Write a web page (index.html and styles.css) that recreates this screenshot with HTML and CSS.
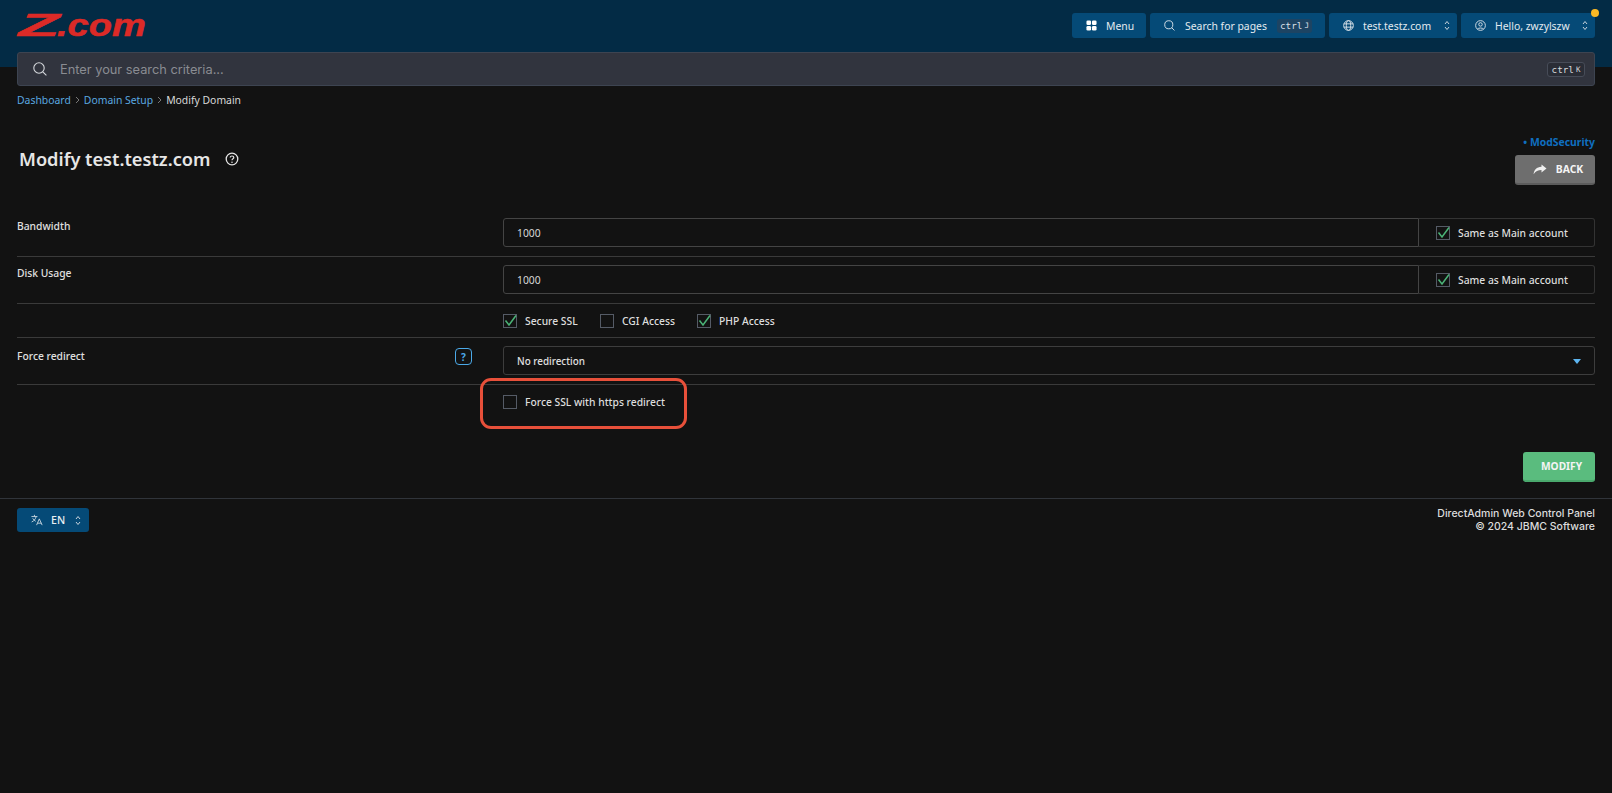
FILE: index.html
```html
<!DOCTYPE html>
<html lang="en">
<head>
<meta charset="utf-8">
<title>Modify test.testz.com</title>
<link rel="stylesheet" href="styles.css">
</head>
<body>
<header class="top">
  <div class="top-row">
    <svg class="logo" viewBox="0 0 129 23" role="img" aria-label="Z.com">
      <text class="logo-text" x="1.5" y="22" textLength="41" lengthAdjust="spacingAndGlyphs">Z</text>
      <text class="logo-text" x="40" y="22" textLength="89" lengthAdjust="spacingAndGlyphs">.com</text>
    </svg>
    <nav class="top-nav">
      <button class="nav-btn nav-menu">
        <svg class="ico" viewBox="0 0 12 12"><rect x="0.5" y="0.5" width="5" height="5" rx="1.4" fill="#fff"/><rect x="6.5" y="0.5" width="5" height="5" rx="1.4" fill="#fff"/><rect x="0.5" y="6.5" width="5" height="5" rx="1.4" fill="#fff"/><rect x="6.5" y="6.5" width="5" height="5" rx="1.4" fill="#fff"/></svg>
        <span>Menu</span>
      </button>
      <button class="nav-btn nav-search">
        <svg class="ico" viewBox="0 0 12 12" fill="none" stroke="#dfe6ec" stroke-width="1"><circle cx="5.2" cy="5.2" r="4.4"/><path d="M8.4 8.4L11.4 11.4"/></svg>
        <span>Search for pages</span>
        <kbd class="kbd-nav">ctrl<b>J</b></kbd>
      </button>
      <button class="nav-btn nav-domain">
        <svg class="ico" viewBox="0 0 12 12" fill="none" stroke="#dfe6ec" stroke-width="1"><circle cx="6" cy="6" r="5.3"/><ellipse cx="6" cy="6" rx="2.4" ry="5.3"/><path d="M1 4.2H11M1 7.8H11"/></svg>
        <span class="grow">test.testz.com</span>
        <svg class="updown" viewBox="0 0 6 11" fill="none" stroke="#c8d3dc" stroke-width="1"><path d="M1 4L3 1.5L5 4M1 7L3 9.5L5 7"/></svg>
      </button>
      <button class="nav-btn nav-user">
        <svg class="ico" viewBox="0 0 12 12" fill="none" stroke="#dfe6ec" stroke-width="1"><circle cx="6" cy="6" r="5.3"/><circle cx="6" cy="4.8" r="1.9"/><path d="M2.8 9.8C3.6 8.4 8.4 8.4 9.2 9.8"/></svg>
        <span class="grow">Hello, zwzylszw</span>
        <svg class="updown" viewBox="0 0 6 11" fill="none" stroke="#c8d3dc" stroke-width="1"><path d="M1 4L3 1.5L5 4M1 7L3 9.5L5 7"/></svg>
        <i class="dot"></i>
      </button>
    </nav>
  </div>
  <div class="search">
    <svg class="search-ico" viewBox="0 0 14 14" fill="none" stroke="#d5d8dc" stroke-width="1.1"><circle cx="6" cy="6" r="5.2"/><path d="M9.8 9.8L13.4 13.4"/></svg>
    <span class="search-text">Enter your search criteria...</span>
    <kbd class="kbd-search">ctrl<b>K</b></kbd>
  </div>
</header>

<main class="page">
  <div class="crumbs">
    <a>Dashboard</a><svg class="sep" viewBox="0 0 5 8"><path d="M1 1L4 4L1 7"/></svg><a>Domain Setup</a><svg class="sep" viewBox="0 0 5 8"><path d="M1 1L4 4L1 7"/></svg><span>Modify Domain</span>
  </div>

  <div class="head">
    <h1 class="title">Modify test.testz.com
      <svg class="title-help" viewBox="0 0 14 14" fill="none" stroke="#e4e4e4" stroke-width="1.3"><circle cx="7" cy="7" r="5.8"/><path d="M5.2 5.6C5.2 3.4 8.8 3.5 8.8 5.5C8.8 6.9 7 6.8 7 8.3" stroke-width="1.2"/><circle cx="7" cy="10.2" r="0.5" fill="#e4e4e4" stroke-width="0.5"/></svg>
    </h1>
    <div class="head-side">
      <a class="modsec">• ModSecurity</a>
      <button class="btn btn-back">
        <svg class="back-ico" viewBox="0 0 14 11"><path d="M8.5 0.5L13.5 4.5L8.5 8.5V6C5 6 2.5 7.2 0.6 10.3C1 6 3.6 3 8.5 2.8Z" fill="#f0f0f0"/></svg>
        BACK
      </button>
    </div>
  </div>

  <form class="form">
    <div class="row row-field">
      <label class="lbl">Bandwidth</label>
      <div class="group">
        <div class="input">1000</div>
        <div class="addon"><i class="cb on"><svg viewBox="0 0 14 14"><path d="M2.5 6.5L6 11L13 1.5"/></svg></i>Same as Main account</div>
      </div>
    </div>
    <div class="row row-field">
      <label class="lbl">Disk Usage</label>
      <div class="group">
        <div class="input">1000</div>
        <div class="addon"><i class="cb on"><svg viewBox="0 0 14 14"><path d="M2.5 6.5L6 11L13 1.5"/></svg></i>Same as Main account</div>
      </div>
    </div>
    <div class="row row-checks">
      <div class="lbl"></div>
      <div class="checks">
        <span class="check"><i class="cb on"><svg viewBox="0 0 14 14"><path d="M2.5 6.5L6 11L13 1.5"/></svg></i>Secure SSL</span>
        <span class="check"><i class="cb"></i>CGI Access</span>
        <span class="check"><i class="cb on"><svg viewBox="0 0 14 14"><path d="M2.5 6.5L6 11L13 1.5"/></svg></i>PHP Access</span>
      </div>
    </div>
    <div class="row row-field">
      <label class="lbl lbl-help">Force redirect<i class="help">?</i></label>
      <div class="select">No redirection<i class="caret"></i></div>
    </div>
    <div class="row row-last">
      <div class="lbl"></div>
      <div class="checks">
        <span class="check highlight"><i class="cb"></i>Force SSL with https redirect<i class="ring"></i></span>
      </div>
    </div>
    <div class="actions"><button class="btn btn-modify" type="button">MODIFY</button></div>
  </form>
</main>

<footer class="foot">
  <button class="lang">
    <svg class="lang-ico" viewBox="0 0 14 13" fill="none" stroke="#d5dfe7" stroke-width="1"><path d="M0.5 2.5H7.5M4 0.5V2.5M6 2.5C5.4 5.4 3.4 7.6 0.8 8.8M2 4.5C2.8 6 4 7.2 5.5 8"/><path d="M6.5 12.5L9.7 5.2L13 12.5M7.6 10.2H12"/></svg>
    <span>EN</span>
    <svg class="updown" viewBox="0 0 6 11" fill="none" stroke="#c8d3dc" stroke-width="1"><path d="M1 4L3 1.5L5 4M1 7L3 9.5L5 7"/></svg>
  </button>
  <div class="copy">DirectAdmin Web Control Panel<br>© 2024 JBMC Software</div>
</footer>
</body>
</html>
```

FILE: styles.css
```css
* { box-sizing: border-box; }
html, body { margin: 0; height: 100%; }
body {
  background: #121212;
  color: #e6e6e6;
  font-family: "Noto Sans", sans-serif;
  font-size: 10.3px;
  min-height: 793px;
}
button { font-family: inherit; border: 0; padding: 0; cursor: pointer; }
i { font-style: normal; }

.top {
  padding: 13px 17px 0;
  background: linear-gradient(#032b45 67px, transparent 67px);
}
.top-row { display: flex; justify-content: space-between; height: 25px; }
.logo { display: block; width: 129px; height: 23px; margin-top: 1px; overflow: visible; }
.logo-text { font: italic 700 31px "Liberation Sans", sans-serif; fill: #dc2a27; stroke: #dc2a27; stroke-width: 0.5; }
.top-nav { display: flex; gap: 4px; }
.nav-btn {
  position: relative;
  display: flex;
  align-items: center;
  height: 25px;
  padding: 0 0 0 14px;
  gap: 9px;
  background: #054a77;
  color: #e3eaf0;
  border-radius: 3px;
  font-size: 10.4px;
  white-space: nowrap;
}
.nav-menu { width: 74px; }
.nav-search { width: 175px; gap: 10px; }
.nav-domain { width: 128px; }
.nav-user { width: 134px; }
.grow { flex: 1; text-align: left; }
.ico { width: 11px; height: 11px; flex: none; }
.updown { width: 6px; height: 11px; flex: none; margin-right: 7px; }
.dot {
  position: absolute;
  top: -4px;
  right: -4px;
  width: 8px;
  height: 8px;
  border-radius: 50%;
  background: #fdb924;
}
kbd { font-family: "DejaVu Sans Mono", "Liberation Mono", monospace; }
kbd b { font-weight: 400; font-size: 7.5px; margin-left: 2px; }
.kbd-nav {
  display: flex;
  align-items: center;
  justify-content: center;
  width: 37px;
  height: 14px;
  margin-left: auto;
  margin-right: 13px;
  background: #1d4463;
  border-radius: 3px;
  font-size: 9.3px;
  color: #d8dfe5;
}
.search {
  display: flex;
  align-items: center;
  height: 34px;
  margin-top: 14px;
  padding: 0 9px 0 15px;
  background: #31343e;
  border: 1px solid #3d4451;
  border-radius: 3px;
}
.search-ico { width: 14px; height: 14px; flex: none; }
.search-text { flex: 1; margin-left: 13px; font: 12.8px Inter, sans-serif; color: #8a8c92; }
.kbd-search {
  display: flex;
  align-items: center;
  justify-content: center;
  width: 38px;
  height: 15px;
  border: 1px solid #474c58;
  border-radius: 3px;
  background: #2a2d36;
  font-size: 9.3px;
  color: #d8dadd;
}

.page { padding: 0 17px; }
.crumbs { display: flex; align-items: center; height: 27px; font-size: 10.4px; color: #d9d9d9; }
.crumbs a { color: #5aa9e0; }
.sep { width: 5px; height: 8px; margin: 0 4px; fill: none; stroke: #777; stroke-width: 1; }

.head { display: flex; justify-content: space-between; height: 51px; margin-top: 21px; }
.title {
  display: flex;
  align-items: center;
  gap: 14px;
  height: 22px;
  margin: 14px 0 0 2px;
  font-size: 18.2px;
  font-weight: 600;
  color: #e6e6e6;
  white-space: nowrap;
}
.title-help { width: 14px; height: 14px; }
.head-side { display: flex; flex-direction: column; align-items: flex-end; }
.modsec { height: 21px; line-height: 16px; font-size: 10.4px; font-weight: 700; color: #0f6fc0; }
.btn {
  display: flex;
  align-items: center;
  justify-content: center;
  color: #f4f4f4;
  font-weight: 700;
  font-size: 10.4px;
  border-radius: 3px;
  height: 30px;
}
.btn-back { width: 80px; gap: 9px; padding-left: 6px; background: #6e6e6e; border-bottom: 2px solid #5c5c5c; }
.back-ico { width: 14px; height: 11px; }

.form { margin-top: 25px; }
.row { display: flex; border-bottom: 1px solid #3a3a3a; }
.row-field { height: 47px; padding-top: 8px; }
.row-checks { height: 34px; align-items: center; }
.row-last { border-bottom: 0; height: 33px; padding-top: 10px; align-items: flex-start; }
.lbl {
  flex: none;
  width: 486px;
  font-weight: 500;
  font-size: 10.3px;
  color: #e0e0e0;
  line-height: 16px;
}
.lbl-help { display: flex; justify-content: space-between; align-items: flex-start; padding: 2px 31px 0 0; }
.help {
  display: flex;
  align-items: center;
  justify-content: center;
  width: 17px;
  height: 17px;
  border: 1.5px solid #4ba9e8;
  border-radius: 4px;
  color: #4ba9e8;
  font-size: 10px;
  font-weight: 700;
}
.group { flex: 1; display: flex; height: 29px; }
.input {
  flex: 1;
  display: flex;
  align-items: center;
  padding-left: 13px;
  border: 1px solid #444;
  border-radius: 3px 0 0 3px;
  color: #d8d8d8;
}
.addon {
  display: flex;
  align-items: center;
  gap: 8px;
  width: 176px;
  padding-left: 17px;
  border: 1px solid #333;
  border-left: 0;
  border-radius: 0 3px 3px 0;
  font-weight: 500;
  color: #dedede;
}
.cb {
  flex: none;
  display: block;
  width: 14px;
  height: 14px;
  border: 1px solid #555b66;
  position: relative;
}
.cb svg {
  display: block;
  position: absolute;
  inset: -1px;
  width: 14px;
  height: 14px;
  fill: none;
  stroke: #4bb377;
  stroke-width: 1.5;
}
.checks { display: flex; }
.check { position: relative; display: flex; align-items: center; gap: 8px; font-weight: 500; color: #dedede; line-height: 14px; }
.row-checks .check:nth-child(1) { width: 97px; }
.row-checks .check:nth-child(2) { width: 97px; }
.ring {
  position: absolute;
  top: -17px;
  left: -23px;
  width: 207px;
  height: 51px;
  border: 3px solid #e8503a;
  border-radius: 11px;
  pointer-events: none;
}
.select {
  flex: 1;
  position: relative;
  display: flex;
  align-items: center;
  height: 29px;
  padding-left: 13px;
  border: 1px solid #3d3d3d;
  border-radius: 3px;
  font-weight: 500;
  font-size: 9.9px;
  color: #e0e0e0;
}
.caret {
  position: absolute;
  right: 13px;
  top: 12px;
  width: 0;
  height: 0;
  border: 4.5px solid transparent;
  border-top: 5px solid #5db5f0;
  border-bottom: 0;
}
.actions { display: flex; justify-content: flex-end; margin-top: 34px; }
.btn-modify { width: 72px; padding-left: 5px; background: #5abc7e; border-bottom: 2px solid #4aa96d; font-size: 10.2px; }

.foot {
  display: flex;
  justify-content: space-between;
  margin-top: 16px;
  padding: 9px 17px 0;
  border-top: 1px solid #30343a;
}
.lang {
  display: flex;
  align-items: center;
  width: 72px;
  height: 24px;
  padding-left: 14px;
  background: #054a77;
  color: #e8eef2;
  border-radius: 3px;
  font-size: 10.6px;
  font-weight: 500;
}
.lang-ico { width: 12px; height: 12px; flex: none; margin-right: 8px; }
.lang span { width: 24px; text-align: left; }
.copy { margin-top: -1px; text-align: right; font: 500 10.5px/13px Inter, sans-serif; color: #dcdcdc; }
```
